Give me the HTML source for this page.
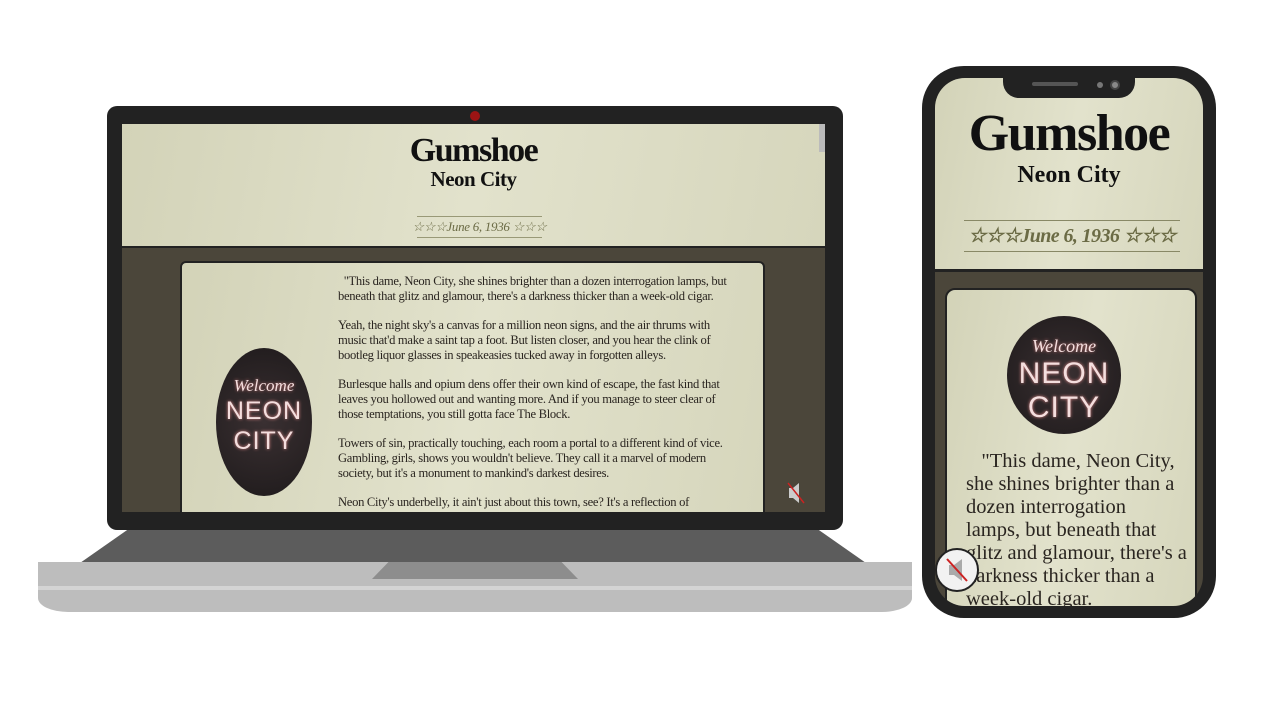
<!DOCTYPE html>
<html><head><meta charset="utf-8"><style>
*{margin:0;padding:0;box-sizing:border-box}
body{width:1280px;height:720px;background:#fff;position:relative;overflow:hidden;font-family:"Liberation Serif",serif}
.abs{position:absolute}
.beige{background:linear-gradient(100deg,#d3d3b8,#e2e2cc 50%,#d6d6bc)}
.dark{background:#4b463a}
.circ{border-radius:50%;background:radial-gradient(circle at 50% 50%,#3a3032,#1e1a1b);overflow:hidden;color:#f4dede;text-align:center;font-family:"Liberation Sans",sans-serif}
.circ .w{font-family:"Liberation Serif",serif;font-style:italic;text-shadow:0 0 3px #c77}
.circ .n{text-shadow:0 0 3px #d88;letter-spacing:1px}
.date{white-space:nowrap;overflow:visible;display:flex;justify-content:center}
.nw{white-space:nowrap}
</style></head><body>
<!-- laptop -->
<div class="abs" style="left:80px;top:530px;width:786px;height:33px;background:#5c5c5c;clip-path:polygon(6% 0,94% 0,100% 100%,0 100%)"></div>
<div class="abs" style="left:38px;top:562px;width:874px;height:50px;background:#bdbdbd;border-radius:0 0 30px 30px/0 0 14px 14px"></div>
<div class="abs" style="left:38px;top:586px;width:874px;height:4px;background:#d4d4d4"></div>
<div class="abs" style="left:372px;top:562px;width:206px;height:17px;background:#8d8d8d;clip-path:polygon(8% 0,92% 0,100% 100%,0 100%)"></div>
<div class="abs" style="left:107px;top:106px;width:736px;height:424px;background:#222;border-radius:10px"></div>
<div class="abs" style="left:470px;top:111px;width:10px;height:10px;border-radius:50%;background:#9c1414"></div>
<div class="abs dark" style="left:122px;top:124px;width:703px;height:388px;overflow:hidden">
 <div class="abs beige" style="left:0;top:0;width:703px;height:124px;border-bottom:2px solid #222"></div>
 <div class="abs" style="left:0;top:8px;width:703px;text-align:center;font-weight:bold;font-size:34px;letter-spacing:-1.5px;color:#111">Gumshoe</div>
 <div class="abs" style="left:0;top:43px;width:703px;text-align:center;font-weight:bold;font-size:21px;letter-spacing:-0.5px;color:#111">Neon City</div>
 <div class="abs date" style="left:295px;top:92px;width:125px;height:22px;border-top:1px solid #999977;border-bottom:1px solid #999977;font-style:italic;font-size:13px;line-height:20px;color:#6b6b45;letter-spacing:-0.3px">☆☆☆June 6, 1936 ☆☆☆</div>
 <div class="abs" style="left:697px;top:0;width:6px;height:28px;background:#bbb"></div>
 <div class="abs beige" style="left:58px;top:137px;width:585px;height:260px;border:2px solid #222;border-radius:6px"></div>
 <div class="abs circ" style="left:94px;top:224px;width:96px;height:148px;padding-top:28px">
  <div class="w" style="font-size:17px">Welcome</div><div class="n" style="font-size:25px;line-height:30px">NEON<br>CITY</div></div>
 <div class="abs nw" style="left:216px;top:150px;font-size:12.6px;line-height:15px;color:#2a2520;letter-spacing:-0.3px">
  <p>&nbsp;&nbsp;"This dame, Neon City, she shines brighter than a dozen interrogation lamps, but<br>beneath that glitz and glamour, there's a darkness thicker than a week-old cigar.</p>
  <p style="margin-top:14px">Yeah, the night sky's a canvas for a million neon signs, and the air thrums with<br>music that'd make a saint tap a foot. But listen closer, and you hear the clink of<br>bootleg liquor glasses in speakeasies tucked away in forgotten alleys.</p>
  <p style="margin-top:14px">Burlesque halls and opium dens offer their own kind of escape, the fast kind that<br>leaves you hollowed out and wanting more. And if you manage to steer clear of<br>those temptations, you still gotta face The Block.</p>
  <p style="margin-top:14px">Towers of sin, practically touching, each room a portal to a different kind of vice.<br>Gambling, girls, shows you wouldn't believe. They call it a marvel of modern<br>society, but it's a monument to mankind's darkest desires.</p>
  <p style="margin-top:14px">Neon City's underbelly, it ain't just about this town, see? It's a reflection of</p>
 </div>
 <svg class="abs" style="left:664px;top:356px" width="20" height="26"><path d="M3 8h4l6-5v20l-6-5H3z" fill="#ccc"/><path d="M2 3l16 20" stroke="#c22" stroke-width="1.5"/></svg>
</div>
<!-- phone -->
<div class="abs" style="left:922px;top:66px;width:294px;height:552px;background:#222;border-radius:42px"></div>
<div class="abs dark" style="left:935px;top:78px;width:268px;height:528px;border-radius:30px;overflow:hidden">
 <div class="abs beige" style="left:0;top:0;width:268px;height:194px;border-bottom:3px solid #222"></div>
 <div class="abs" style="left:0;top:26px;width:268px;text-align:center;font-weight:bold;font-size:52px;letter-spacing:-1.5px;color:#111">Gumshoe</div>
 <div class="abs" style="left:0;top:84px;width:268px;text-align:center;font-weight:bold;font-size:24px;color:#111">Neon City</div>
 <div class="abs date" style="left:29px;top:142px;width:216px;height:32px;border-top:1px solid #888866;border-bottom:1px solid #888866;font-style:italic;font-weight:bold;font-size:20px;line-height:30px;color:#6b6b45;letter-spacing:-0.6px">☆☆☆June 6, 1936 ☆☆☆</div>
 <div class="abs beige" style="left:10px;top:210px;width:252px;height:330px;border:2px solid #222;border-radius:10px"></div>
 <div class="abs circ" style="left:72px;top:238px;width:114px;height:118px;padding-top:20px">
  <div class="w" style="font-size:18px">Welcome</div><div class="n" style="font-size:30px;line-height:34px">NEON<br>CITY</div></div>
 <div class="abs nw" style="left:31px;top:372px;font-size:20.5px;line-height:23px;color:#2a2520;letter-spacing:0">&nbsp;&nbsp;&nbsp;"This dame, Neon City,<br>she shines brighter than a<br>dozen interrogation<br>lamps, but beneath that<br>glitz and glamour, there's a<br>darkness thicker than a<br>week-old cigar.</div>
</div>
<div class="abs" style="left:1003px;top:66px;width:132px;height:32px;background:#222;border-radius:0 0 16px 16px"></div>
<div class="abs" style="left:1032px;top:82px;width:46px;height:4px;background:#555;border-radius:2px"></div>
<div class="abs" style="left:1097px;top:82px;width:6px;height:6px;background:#777;border-radius:50%"></div>
<div class="abs" style="left:1110px;top:80px;width:10px;height:10px;background:#888;border-radius:50%;border:2px solid #444"></div>
<div class="abs" style="left:935px;top:548px;width:44px;height:44px;border-radius:50%;background:#f2f2f2;border:2px solid #222"></div>
<svg class="abs" style="left:943px;top:555px" width="30" height="30"><path d="M6 10h5l8-6v22l-8-6H6z" fill="#aaa"/><path d="M4 4l20 22" stroke="#c22" stroke-width="2"/></svg>
</body></html>
